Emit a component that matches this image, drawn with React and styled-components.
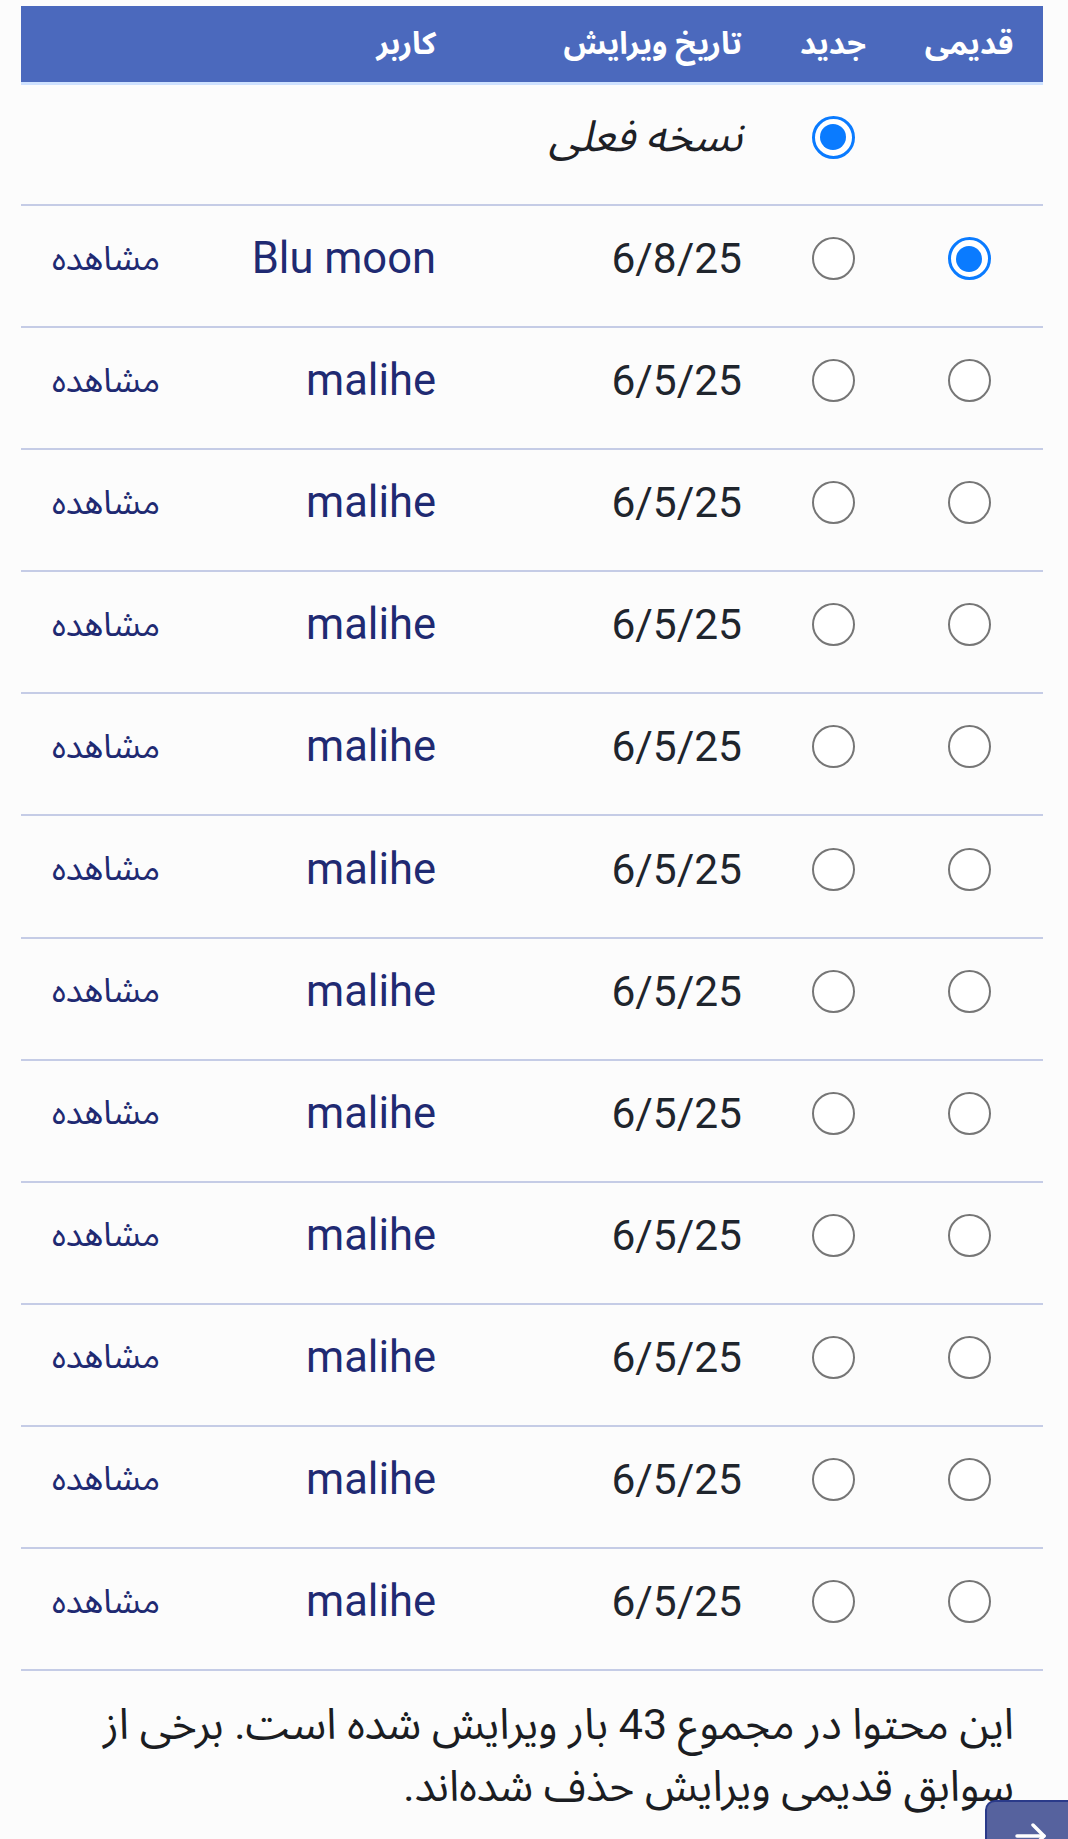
import React from 'react';
import styled, { createGlobalStyle } from 'styled-components';

const GlobalStyle = createGlobalStyle`
  html, body {
    margin: 0;
    padding: 0;
    background: #fcfcfc;
  }
  body {
    font-family: Roboto, "Noto Sans Arabic", "DejaVu Sans", sans-serif;
    min-height: 1839px;
  }
`;

const rows = [
  { date: '6/8/25', user: 'Blu moon', old: true },
  ...Array.from({ length: 11 }, () => ({ date: '6/5/25', user: 'malihe', old: false })),
];

const HistoryPage = () => {
  return (
    <Page>
      <GlobalStyle />
      <Table>
        <HeadRow>
          <HeadCell center>قدیمی</HeadCell>
          <HeadCell center>جدید</HeadCell>
          <HeadCell>تاریخ ویرایش</HeadCell>
          <HeadCell>کاربر</HeadCell>
          <HeadCell />
        </HeadRow>
        <Row first>
          <Cell center />
          <Cell center>
            <Radio checked />
          </Cell>
          <Cell>
            <Current>نسخه فعلی</Current>
          </Cell>
          <Cell />
          <Cell />
        </Row>
        {rows.map((r, i) => (
          <Row key={i}>
            <Cell center>
              <Radio checked={r.old} />
            </Cell>
            <Cell center>
              <Radio />
            </Cell>
            <Cell>
              <DateText>{r.date}</DateText>
            </Cell>
            <Cell>
              <UserText>{r.user}</UserText>
            </Cell>
            <Cell>
              <ViewLink>مشاهده</ViewLink>
            </Cell>
          </Row>
        ))}
      </Table>
      <Note>
        این محتوا در مجموع 43 بار ویرایش شده است. برخی از
        <br />
        سوابق قدیمی ویرایش حذف شده‌اند.
      </Note>
      <BackButton aria-label="بازگشت">
        <svg width="40" height="40" viewBox="0 0 40 40" fill="none" stroke="#fff" strokeWidth="3.5" strokeLinecap="round" strokeLinejoin="round">
          <path d="M6 20 H33" />
          <path d="M22 9 L33 20 L22 31" />
        </svg>
      </BackButton>
    </Page>
  );
};

const Page = styled.div`
  position: relative;
  padding: 6px 25px 0 21px;
  height: 1833px;
  overflow: hidden;
`;

const Table = styled.div`
  direction: rtl;
  width: 1022px;
`;

const cols = `148px 124px 306px 276px 168px`;

const HeadRow = styled.div`
  display: grid;
  grid-template-columns: ${cols};
  align-items: center;
  height: 76px;
  background: #4b69bd;
  border-bottom: 3px solid #cfe2ff;
`;

const HeadCell = styled.div`
  color: #fff;
  font-weight: bold;
  font-size: 31px;
  text-align: ${(p) => (p.center ? 'center' : 'right')};
  padding: ${(p) => (p.center ? '0' : '0 29px 0 0')};
`;

const Row = styled.div`
  display: grid;
  grid-template-columns: ${cols};
  align-items: center;
  height: ${(p) => (p.first ? '119px' : '120.1px')};
  border-bottom: 2px solid #c5cce6;
  box-sizing: content-box;
  & > * {
    margin-bottom: 15px;
  }
`;

const Cell = styled.div`
  display: flex;
  justify-content: ${(p) => (p.center ? 'center' : 'flex-start')};
  align-items: center;
  padding: ${(p) => (p.center ? '0' : '0 29px 0 0')};
`;

const Radio = styled.span`
  display: inline-block;
  box-sizing: border-box;
  width: 43px;
  height: 43px;
  border-radius: 50%;
  background: #fff;
  border: ${(p) => (p.checked ? '3px solid #0a7bff' : '2.5px solid #767676')};
  position: relative;
  &::after {
    content: '';
    display: ${(p) => (p.checked ? 'block' : 'none')};
    position: absolute;
    left: 50%;
    top: 50%;
    width: 26px;
    height: 26px;
    margin: -13px 0 0 -13px;
    border-radius: 50%;
    background: #0a7bff;
  }
`;

const Current = styled.span`
  font-size: 43px;
  font-style: italic;
  color: #1d2026;
`;

const DateText = styled.span`
  font-size: 42.5px;
  color: #1f252d;
  direction: ltr;
`;

const UserText = styled.span`
  font-size: 43.5px;
  color: #1f2a72;
  direction: ltr;
`;

const ViewLink = styled.span`
  font-size: 34px;
  color: #1f2a72;
  cursor: pointer;
`;

const Note = styled.p`
  direction: rtl;
  margin: 22px 0 0;
  padding: 0 29px 0 0;
  width: 993px;
  font-size: 43px;
  line-height: 62px;
  color: #1b1d22;
`;

const BackButton = styled.button`
  position: absolute;
  left: 985px;
  top: 1800px;
  width: 92px;
  height: 80px;
  padding: 14px 0 0 0;
  display: flex;
  justify-content: center;
  align-items: flex-start;
  background: #56629e;
  border: 2px solid #2a3a8a;
  border-radius: 10px;
  cursor: pointer;
`;

export default HistoryPage;
